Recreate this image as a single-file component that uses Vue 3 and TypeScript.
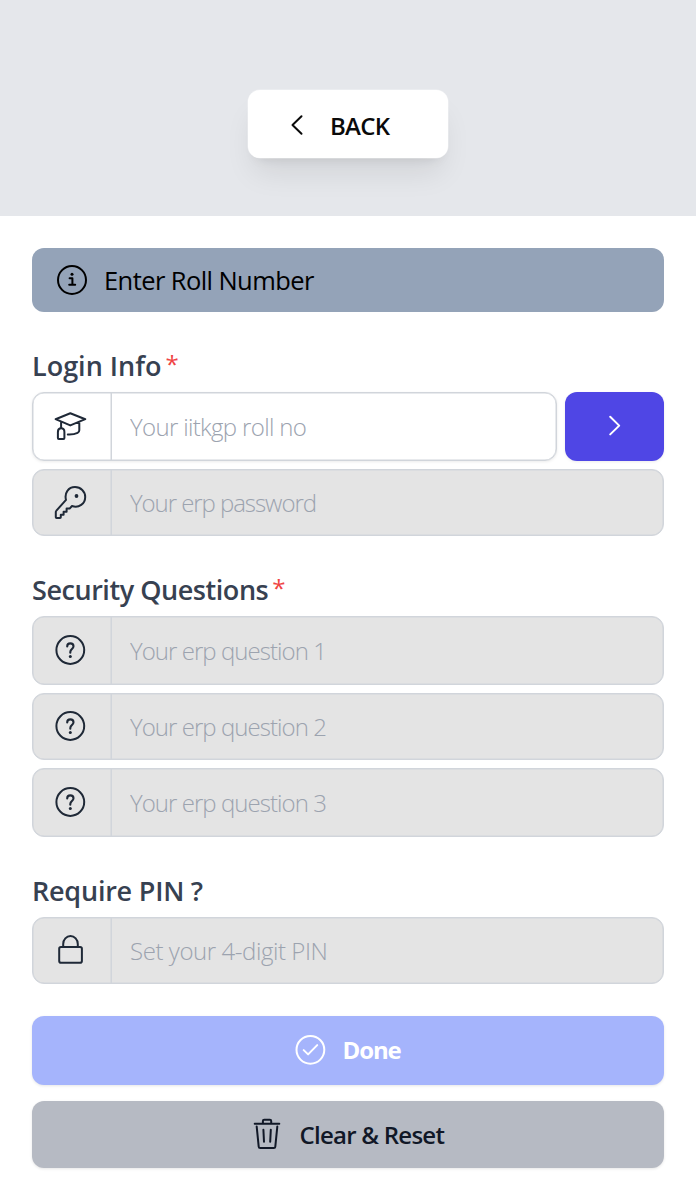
<script setup lang="ts">
import { ref } from 'vue'

interface Question {
  id: number
  placeholder: string
  height: number
}

const rollNo = ref('')
const questions: Question[] = [
  { id: 1, placeholder: 'Your erp question 1', height: 69 },
  { id: 2, placeholder: 'Your erp question 2', height: 67 },
  { id: 3, placeholder: 'Your erp question 3', height: 69 },
]
</script>

<template>
  <div class="page">
    <header class="top">
      <button class="back" type="button">
        <svg class="back-icon" width="14" height="22" viewBox="0 0 14 22">
          <path d="M11.5 2.2 2.5 11l9 8.8" />
        </svg>
        <span class="back-text">BACK</span>
      </button>
    </header>

    <main class="content">
      <div class="notice">
        <svg class="ic" width="32" height="32" viewBox="0 0 32 32">
          <circle cx="16" cy="16" r="14" />
          <path d="M13.6 14.3h2.8v6.3M13.2 20.7h6" />
          <circle class="dot" cx="16" cy="10.3" r="1.5" />
        </svg>
        <span class="notice-text">Enter Roll Number</span>
      </div>

      <h2 class="title"><span>Login Info</span><span class="star">*</span></h2>
      <div class="row">
        <label class="field tall">
          <span class="cell raised">
            <svg class="ic" width="36" height="36" viewBox="0 0 36 36">
              <path d="M3.6 12.2 18.3 6.3l15 5.9-15 6.2ZM9.1 14.8v6M27.3 15.8v7.5c0 1.2-.5 2-1.7 2.6-2.7 1.3-5.7 1.8-9.8 1.6" />
              <path d="M9.1 21.3c2 0 3.3 1.5 3.3 3.6v6.2q0 .9-.9.9H6.8q-.9 0-.9-.9v-6.2c0-2.1 1.2-3.6 3.2-3.6Z" />
            </svg>
          </span>
          <input v-model="rollNo" class="input p-roll" type="text" placeholder="Your iitkgp roll no" />
        </label>
        <button class="next" type="button" aria-label="Next">
          <svg width="14" height="22" viewBox="0 0 14 22"><path d="m2.2 1.8 9 8.8-9 8.8" /></svg>
        </button>
      </div>
      <label class="field off password">
        <span class="cell raised">
          <svg class="ic" width="36" height="36" viewBox="0 0 36 36">
            <path transform="translate(.5 .4)" d="M13.5 16.5C11.7 9.5 16 3.7 22.5 3.7c5.8 0 10.2 4.3 10.2 9.8 0 7-6.3 11.4-13.2 9.1l-2.4 2.6h-3v3.1h-3v3.1H8.3v2.4q0 .8-.8.8H4.1q-.8 0-.8-.8v-5.1q0-.9.6-1.5Z" />
            <circle class="dot" cx="24.5" cy="13" r="1.9" />
          </svg>
        </span>
        <input class="input p-pass" type="password" placeholder="Your erp password" disabled />
      </label>

      <h2 class="title"><span class="t-security">Security Questions</span><span class="star">*</span></h2>
      <div class="questions">
        <label v-for="q in questions" :key="q.id" class="field off" :style="{ height: q.height + 'px' }">
          <span class="cell">
            <svg class="ic" width="36" height="36" viewBox="0 0 36 36">
              <circle cx="18.3" cy="18" r="13.9" />
              <path class="query" d="M15.2 14.4c0-1.9 1.2-3 3.1-3s3.2 1.2 3.2 2.9c0 2.7-3.2 2.9-3.2 5.8v.6" />
              <circle class="dot" cx="18.3" cy="24.6" r="1.5" />
            </svg>
          </span>
          <input class="input p-question" type="text" :placeholder="q.placeholder" disabled />
        </label>
      </div>

      <h2 class="title"><span class="t-pin">Require PIN ?</span></h2>
      <label class="field off">
        <span class="cell raised">
          <svg class="ic" width="36" height="36" viewBox="0 0 36 36">
            <rect x="7.2" y="15.9" width="22.7" height="15.8" rx="1.8" />
            <path d="M11.2 15.9v-3a7.3 7.8 0 0 1 14.6 0v3" />
          </svg>
        </span>
        <input class="input p-pin" type="text" placeholder="Set your 4-digit PIN" disabled />
      </label>

      <button class="action done" type="button">
        <svg class="done-icon" width="32" height="32" viewBox="0 0 32 32">
          <circle cx="16.4" cy="15.8" r="13.9" />
          <path d="m9.7 16.1 4.4 4.3 9.1-9.3" />
        </svg>
        <span class="done-text">Done</span>
      </button>
      <button class="action clear" type="button">
        <svg class="clear-icon" width="30" height="34" viewBox="0 0 30 34">
          <path d="M2.7 6.8h24.6M10.9 6.3V4q0-1.3 1.3-1.3h5.7q1.3 0 1.3 1.3v2.3M4.7 9.6l2 20.1q.1 1.4 1.5 1.4h13.6q1.4 0 1.5-1.4l2-20.1M11.4 12.8l.6 12M18.8 12.8l-.6 12" />
        </svg>
        <span class="clear-text">Clear &amp; Reset</span>
      </button>
    </main>
  </div>
</template>

<style>
body {
  margin: 0;
  background: #fff;
}
</style>

<style scoped>
.page {
  height: 1200px;
  overflow: hidden;
  font-family: "Segoe UI", "Open Sans", "Noto Sans", sans-serif;
  background: #fff;
}
.page * {
  box-sizing: border-box;
}
svg {
  flex: none;
  display: block;
  fill: none;
  stroke: currentColor;
  stroke-width: 2;
  stroke-linecap: round;
  stroke-linejoin: round;
}
.dot {
  fill: currentColor;
  stroke: none;
}
button {
  border: 0;
  padding: 0;
  font-family: inherit;
}
span {
  white-space: nowrap;
}
.top {
  height: 216px;
  padding-top: 90px;
  background: #e5e7eb;
}
.back {
  display: flex;
  align-items: center;
  width: 200px;
  height: 68px;
  margin: 0 auto;
  padding-left: 42px;
  border-radius: 12px;
  background: #fff;
  color: #0a0a0a;
  box-shadow: 0 0 0 0.5px rgba(255, 255, 255, 0.5), 0 20px 30px -6px rgba(0, 0, 0, 0.09), 0 8px 12px -8px rgba(0, 0, 0, 0.1);
}
.back-icon {
  margin-top: 2px;
}
.back-text {
  margin: 4px 0 0 26px;
  font-size: 24px;
  font-weight: 600;
  line-height: 32px;
  letter-spacing: -0.7px;
}
.content {
  padding: 32px 32px 0;
}
.notice {
  display: flex;
  align-items: center;
  height: 64px;
  padding-left: 24px;
  border-radius: 12px;
  background: #94a3b8;
  color: #000;
}
.notice-text {
  margin: 0 0 0 16px;
  font-size: 25.5px;
  font-weight: 400;
  line-height: 36px;
  letter-spacing: -0.58px;
}
.title {
  display: flex;
  height: 80px;
  margin: 0;
  padding-top: 34px;
  font-size: 27px;
  font-weight: 600;
  line-height: 40px;
  color: #374151;
}
.t-security {
  letter-spacing: -0.45px;
}
.t-pin {
  letter-spacing: -0.22px;
}
.star {
  margin-left: 4px;
  color: #ef4444;
  font-size: 24px;
  line-height: 35px;
  font-weight: 400;
}
.row {
  display: flex;
  gap: 8px;
}
.field {
  display: flex;
  height: 67px;
  border-radius: 12px;
  overflow: hidden;
  background: #fff;
  color: #1f2937;
  border: 1px solid #d1d5db;
  box-shadow: inset 0 0 0 0.5px #d1d5db, 0 1px 3px rgba(0, 0, 0, 0.08);
}
.tall {
  height: 69px;
  flex: 1;
}
.off {
  background: #e4e4e4;
  box-shadow: inset 0 0 0 0.5px #d1d5db;
}
.password {
  margin-top: 8px;
}
.cell {
  flex: none;
  display: flex;
  align-items: center;
  width: 79px;
  padding: 0 0 1px 19px;
  border-right: 1px solid #d1d5db;
  box-shadow: inset -0.5px 0 0 #d1d5db;
}
.raised {
  padding-bottom: 3px;
}
.query {
  stroke-width: 2.1;
}
.input {
  flex: 1;
  min-width: 0;
  padding: 0 0 1px 18px;
  border: 0;
  outline: 0;
  background: transparent;
  font-family: inherit;
  font-size: 24px;
  font-weight: 300;
}
.p-roll {
  letter-spacing: -0.66px;
}
.p-pass {
  letter-spacing: -1.06px;
}
.p-question {
  letter-spacing: -0.95px;
}
.p-pin {
  letter-spacing: -0.43px;
}
.input::placeholder {
  color: #9ca3af;
  opacity: 1;
}
.next {
  display: flex;
  align-items: center;
  justify-content: center;
  width: 99px;
  height: 69px;
  padding-bottom: 2px;
  border-radius: 12px;
  background: #4f46e5;
  color: #fff;
  box-shadow: 0 1px 3px rgba(0, 0, 0, 0.08);
}
.questions {
  display: flex;
  flex-direction: column;
  gap: 8px;
}
.action {
  display: flex;
  align-items: center;
  width: 100%;
  border-radius: 12px;
  font-size: 24px;
  line-height: 32px;
  box-shadow: 0 1px 3px rgba(0, 0, 0, 0.1);
}
.done {
  height: 69px;
  margin-top: 32px;
  padding: 0 0 2px 262px;
  background: #a5b4fc;
  color: #fff;
}
.done-text {
  margin: 0 0 0 16.5px;
  font-weight: 700;
  letter-spacing: -1.1px;
}
.clear {
  height: 67px;
  margin-top: 16px;
  padding-left: 220px;
  background: #b6bac3;
  color: #111827;
}
.clear-icon {
  margin-bottom: 2px;
}
.clear-text {
  margin: 0 0 0 17.5px;
  font-weight: 600;
  letter-spacing: -0.75px;
}
</style>
